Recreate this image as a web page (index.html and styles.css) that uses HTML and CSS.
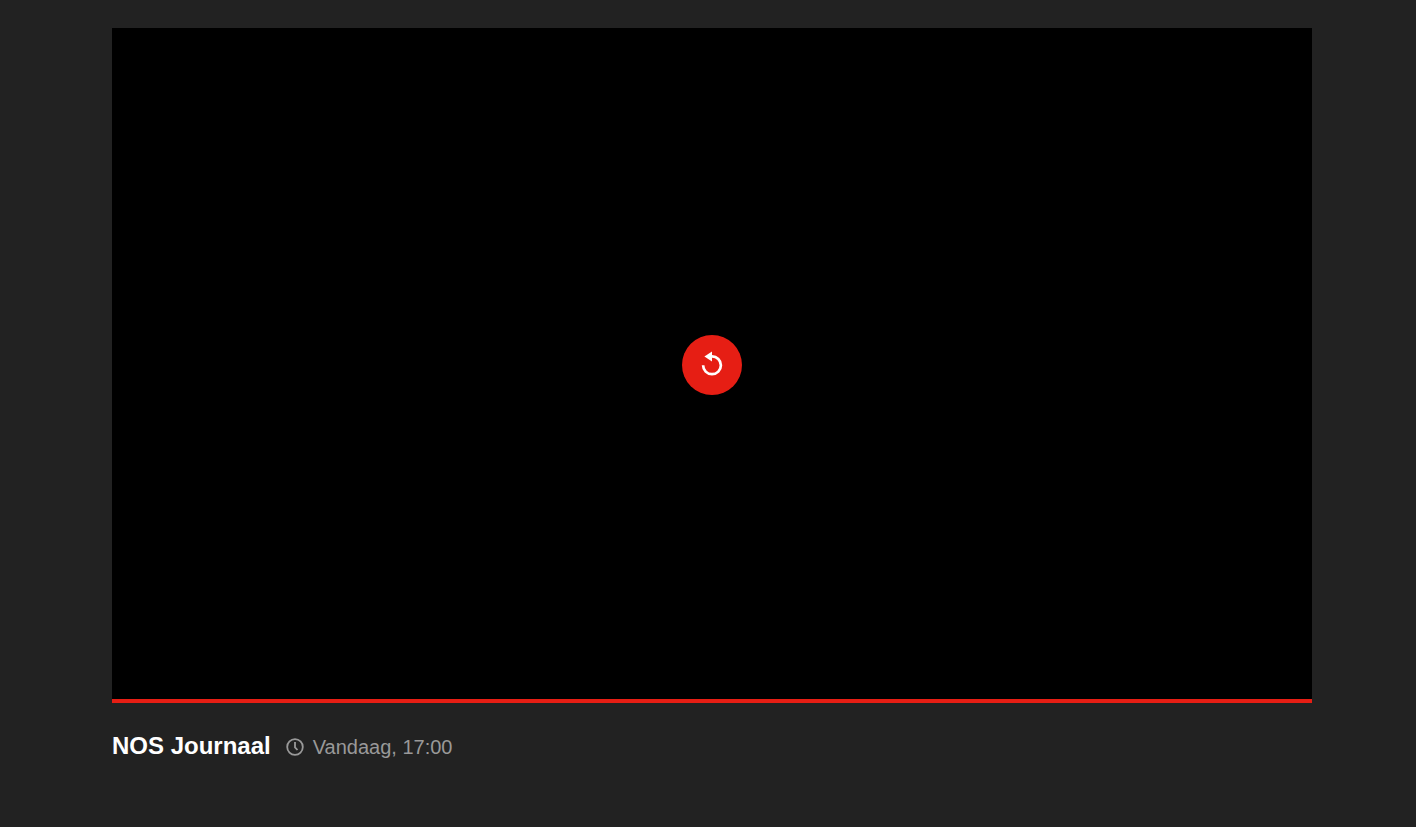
FILE: index.html
```html
<!DOCTYPE html>
<html lang="nl">

<head>
  <meta charset="UTF-8">
  <meta name="viewport" content="width=device-width, initial-scale=1.0">
  <title>NOS Journaal</title>
  <link rel="stylesheet" href="styles.css">
</head>

<body>
  <main class="broadcast">
    <div class="player">
      <div class="player-screen">
        <button class="replay" type="button" aria-label="Opnieuw afspelen">
          <svg class="replay-icon" viewBox="0 0 40 40" aria-hidden="true">
            <path d="M11.1 20.3A8.9 8.9 0 1 0 20 11.4H18" fill="none" stroke="#fff" stroke-width="2.7" />
            <path d="M12.4 11.4L20 6.4V16.4z" fill="#fff" />
          </svg>
        </button>
      </div>
      <div class="player-progress"></div>
    </div>
    <div class="info">
      <h1 class="title">NOS Journaal</h1>
      <div class="published">
        <svg class="clock" viewBox="0 0 18 18" aria-hidden="true">
          <circle cx="9" cy="9" r="7.8" />
          <path d="M9 4V9.3L11.5 12" />
        </svg>
        <time datetime="17:00">Vandaag, 17:00</time>
      </div>
    </div>
  </main>
</body>

</html>
```
FILE: styles.css
```css
* {
  box-sizing: border-box;
  margin: 0;
  padding: 0;
}

body {
  padding: 28px 0 28px 8px;
  background: #222;
  color: #fff;
  font-family: Arial, "Liberation Sans", sans-serif;
}

.broadcast {
  max-width: 1200px;
  margin: 0 auto;
}

.player {
  display: flex;
  flex-direction: column;
  aspect-ratio: 16 / 9;
  background: #000;
}

.player-screen {
  display: flex;
  flex: 1;
  align-items: center;
  justify-content: center;
  /* centre the button over the whole player, progress bar included */
  padding-top: 3px;
}

.player-progress {
  height: 4px;
  background: #e61e14;
}

.replay {
  display: flex;
  align-items: center;
  justify-content: center;
  width: 60px;
  height: 60px;
  border: 0;
  border-radius: 50%;
  background: #e61e14;
  cursor: pointer;
}

.replay-icon {
  width: 40px;
  height: 40px;
}

.info {
  display: flex;
  align-items: baseline;
  gap: 15px;
  padding-top: 28px;
}

.title {
  font-size: 24px;
  line-height: 30px;
}

.published {
  display: flex;
  align-items: baseline;
  gap: 9px;
  color: #999;
  font-size: 20px;
  line-height: 30px;
}

.clock {
  align-self: center;
  width: 18px;
  height: 18px;
  fill: none;
  stroke: #999;
  stroke-width: 1.8;
}
```
